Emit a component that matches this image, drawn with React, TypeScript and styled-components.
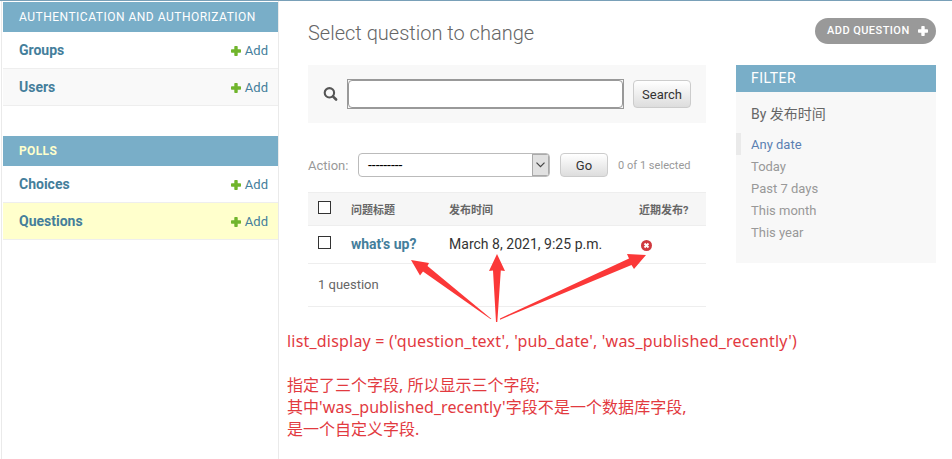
import React from "react";
import styled, { createGlobalStyle } from "styled-components";

const GlobalStyle = createGlobalStyle`
  * { box-sizing: border-box; }
  body {
    margin: 0;
    background: #fff;
    color: #333;
    font: 13px/20px Roboto, "Noto Sans CJK SC", sans-serif;
    overflow: hidden;
  }
  h1, h2, h3, ul, p { margin: 0; padding: 0; font-weight: 400; }
  a { color: #447e9b; text-decoration: none; }
`;

const Page = styled.div`
  position: relative;
  display: flex;
  width: 952px;
  height: 459px;
  border-top: 1px solid #79a0b8;
  overflow: hidden;
`;

const Sidebar = styled.nav`
  flex: none;
  width: 278px;
  margin-left: 1px;
  padding: 1px 0 0 1px;
  border-left: 1px solid #eaeaea;
  border-right: 1px solid #eaeaea;
  display: flex;
  flex-direction: column;
  gap: 30px;
`;

const Module = styled.section``;

const Caption = styled.h2<{ $current?: boolean }>`
  height: 30px;
  padding-left: 16px;
  background: #79aec8;
  color: ${(p) => (p.$current ? "#ffffcc" : "#fff")};
  font-size: 12px;
  line-height: 30px;
  font-weight: ${(p) => (p.$current ? 700 : 400)};
  letter-spacing: ${(p) => (p.$current ? "0.35px" : "0.5px")};
`;

const ModelRow = styled.div<{ $tone?: string }>`
  display: flex;
  align-items: center;
  justify-content: space-between;
  height: 37px;
  padding: 0 10px 0 16px;
  border-bottom: 1px solid #eee;
  background: ${(p) => p.$tone || "#fff"};
`;

const ModelLink = styled.a`
  font-size: 14px;
  font-weight: 700;
`;

const AddLink = styled.a`
  display: flex;
  align-items: center;
  gap: 4px;
  padding-top: 1px;
  svg { display: block; }
`;

const Main = styled.main`
  flex: none;
  width: 628px;
  margin-left: 29px;
`;

const TitleBar = styled.header`
  display: flex;
  justify-content: space-between;
  height: 64px;
`;

const Title = styled.h1`
  padding-top: 20px;
  font-size: 20px;
  line-height: 24px;
  font-weight: 300;
  color: #666;
`;

const AddButton = styled.a`
  display: flex;
  align-items: center;
  justify-content: space-between;
  width: 121px;
  height: 26px;
  margin-top: 17px;
  padding: 0 8px 0 12px;
  border-radius: 13px;
  background: #999;
  color: #fff;
  font-size: 11px;
  font-weight: 500;
  letter-spacing: 0.45px;
  white-space: nowrap;
`;

const Columns = styled.div`
  display: grid;
  grid-template-columns: 398px 200px;
  gap: 30px;
  align-items: start;
`;

const ChangeList = styled.div``;

const Toolbar = styled.form`
  display: flex;
  align-items: center;
  height: 58px;
  padding: 0 15px;
  background: #f8f8f8;
`;

const SearchFrame = styled.div`
  width: 277px;
  height: 30px;
  margin: 0 9px;
  border: 1px solid #999;
`;

const SearchInput = styled.input`
  display: block;
  width: 100%;
  height: 28px;
  border: 1px solid #999;
  border-radius: 4px;
  background: #fff;
  outline: none;
`;

const Button = styled.button<{ $w: number; $h: number }>`
  width: ${(p) => p.$w}px;
  height: ${(p) => p.$h}px;
  padding: 0;
  border: 1px solid #ccc;
  border-radius: 4px;
  background: linear-gradient(#fff, #ddd);
  color: #333;
  font: 13px Roboto, sans-serif;
`;

const Actions = styled.div`
  display: flex;
  align-items: center;
  height: 24px;
  margin: 30px 0 15px;
  color: #999;
`;

const ActionLabel = styled.span`
  width: 50px;
  padding-top: 1px;
`;

const SelectBox = styled.div`
  display: flex;
  justify-content: space-between;
  width: 192px;
  height: 24px;
  margin-right: 10px;
  border: 1px solid #bbb;
  border-radius: 4px;
  background: #fff;
  overflow: hidden;
`;

const SelectValue = styled.span`
  padding-left: 9px;
  color: #000;
  font-size: 14px;
  line-height: 22px;
  letter-spacing: -0.05px;
`;

const SelectArrow = styled.span`
  display: flex;
  align-items: center;
  justify-content: center;
  width: 17px;
  border: 1px solid #aaa;
  background: #e1e1e1;
`;

const Counter = styled.span`
  margin-left: 10px;
  padding-top: 1px;
  font-size: 11px;
  letter-spacing: 0.03px;
`;

const Row = styled.div<{ $head?: boolean }>`
  display: grid;
  grid-template-columns: 43px 98px 190px 1fr;
  align-items: center;
  height: ${(p) => (p.$head ? 34 : 38)}px;
  border-top: ${(p) => (p.$head ? "1px solid #eee" : "0")};
  border-bottom: 1px solid #eee;
  background: ${(p) => (p.$head ? "#f6f6f6" : "#fff")};
  color: ${(p) => (p.$head ? "#666" : "#333")};
  font-size: ${(p) => (p.$head ? 11 : 14)}px;
  font-weight: ${(p) => (p.$head ? 700 : 400)};
  white-space: nowrap;
`;

const HeadCell = styled.span`
  padding-top: 3px;
`;

const Box = styled.span`
  width: 13px;
  height: 13px;
  margin: -4px 0 0 10px;
  border: 1px solid #333;
  background: #fff;
`;

const RecordLink = styled.a`
  padding-bottom: 2px;
  font-weight: 700;
`;

const DateCell = styled.span`
  padding-bottom: 1px;
  letter-spacing: 0.02px;
`;

const StatusCell = styled.span`
  display: flex;
  padding: 2px 0 0 2px;
`;

const Paginator = styled.p`
  height: 43px;
  padding-left: 10px;
  border-bottom: 1px solid #eee;
  color: #666;
  line-height: 42px;
`;

const Filter = styled.aside`
  height: 198px;
  background: #f8f8f8;
`;

const FilterCaption = styled.h2`
  height: 27px;
  padding-left: 15px;
  background: #79aec8;
  color: #fff;
  font-size: 14px;
  line-height: 27px;
  letter-spacing: 0.5px;
`;

const FilterTitle = styled.h3`
  height: 41px;
  padding-left: 15px;
  color: #666;
  font-size: 14px;
  line-height: 44px;
`;

const FilterList = styled.ul`
  list-style: none;
`;

const FilterItem = styled.li<{ $selected?: boolean }>`
  height: 22px;
  padding-left: ${(p) => (p.$selected ? 10 : 15)}px;
  border-left: ${(p) => (p.$selected ? "5px solid #eaeaea" : "0")};
  color: ${(p) => (p.$selected ? "#5b80b2" : "#999")};
  line-height: 23px;
`;

const Arrows = styled.svg`
  position: absolute;
  left: 400px;
  top: 249px;
`;

const Note = styled.div`
  position: absolute;
  left: 287px;
  top: 329px;
  color: #e23a3f;
  font: 16px/22px "Noto Sans", "Noto Sans CJK SC", sans-serif;
  white-space: nowrap;
`;

const NoteLine = styled.p<{ $track?: number; $gap?: boolean }>`
  height: 22px;
  margin-bottom: ${(p) => (p.$gap ? 22 : 0)}px;
  letter-spacing: ${(p) => p.$track || 0}px;
`;

const Plus = ({ color, size = 10 }: { color: string; size?: number }) => (
  <svg width={size} height={size} viewBox="0 0 10 10">
    <path
      d="M3.300 .7q0-.7.7-.7h2q.7 0 .7.7v2.600h2.600q.7 0 .7.7v2q0 .7-.7.7H6.700v2.600q0 .7-.7.7H4q-.7 0-.7-.7V6.700H.7q-.7 0-.7-.7V4q0-.7.7-.7h2.600z"
      fill={color}
    />
  </svg>
);

const Model = ({ name, tone }: { name: string; tone?: string }) => (
  <ModelRow $tone={tone}>
    <ModelLink href="#">{name}</ModelLink>
    <AddLink href="#">
      <Plus color="#70b52c" />
      Add
    </AddLink>
  </ModelRow>
);

const dates = ["Any date", "Today", "Past 7 days", "This month", "This year"];

export default function App() {
  return (
    <>
      <GlobalStyle />
      <Page>
        <Sidebar>
          <Module>
            <Caption>AUTHENTICATION AND AUTHORIZATION</Caption>
            <Model name="Groups" />
            <Model name="Users" tone="#f9f9f9" />
          </Module>
          <Module>
            <Caption $current>POLLS</Caption>
            <Model name="Choices" />
            <Model name="Questions" tone="#ffffcc" />
          </Module>
        </Sidebar>
        <Main>
          <TitleBar>
            <Title>Select question to change</Title>
            <AddButton href="#">
              ADD QUESTION
              <Plus color="#fff" size={10} />
            </AddButton>
          </TitleBar>
          <Columns>
            <ChangeList>
              <Toolbar>
                <svg width="15" height="15" viewBox="0 0 15 15" fill="none" stroke="#555">
                  <circle cx="6.400" cy="5.800" r="4.700" strokeWidth="2.100" />
                  <path d="M9.900 9.300L13.100 12.500" strokeWidth="2.600" strokeLinecap="round" />
                </svg>
                <SearchFrame>
                  <SearchInput type="text" aria-label="Search" />
                </SearchFrame>
                <Button type="button" $w={58} $h={28}>
                  Search
                </Button>
              </Toolbar>
              <Actions>
                <ActionLabel>Action:</ActionLabel>
                <SelectBox>
                  <SelectValue>---------</SelectValue>
                  <SelectArrow>
                    <svg width="9" height="6" viewBox="0 0 9 6" fill="none" stroke="#444" strokeWidth="1.200">
                      <path d="M.5 .7L4.500 4.700L8.500 .7" />
                    </svg>
                  </SelectArrow>
                </SelectBox>
                <Button type="button" $w={48} $h={24}>
                  Go
                </Button>
                <Counter>0 of 1 selected</Counter>
              </Actions>
              <Row $head>
                <Box />
                <HeadCell>问题标题</HeadCell>
                <HeadCell>发布时间</HeadCell>
                <HeadCell>近期发布?</HeadCell>
              </Row>
              <Row>
                <Box />
                <RecordLink href="#">what's up?</RecordLink>
                <DateCell>March 8, 2021, 9:25 p.m.</DateCell>
                <StatusCell>
                  <svg width="11" height="11" viewBox="0 0 11 11">
                    <circle cx="5.500" cy="5.500" r="5.500" fill="#d0393f" />
                    <path d="M3.500 3.500l4 4m0-4l-4 4" stroke="#fff" strokeWidth="1.900" />
                  </svg>
                </StatusCell>
              </Row>
              <Paginator>1 question</Paginator>
            </ChangeList>
            <Filter>
              <FilterCaption>FILTER</FilterCaption>
              <FilterTitle>By 发布时间</FilterTitle>
              <FilterList>
                {dates.map((d, i) => (
                  <FilterItem key={d} $selected={i === 0}>
                    {d}
                  </FilterItem>
                ))}
              </FilterList>
            </Filter>
          </Columns>
        </Main>
        <Arrows width="256" height="76" viewBox="400 250 256 76" fill="#fb3838">
          <path d="M411 260L429 263L427.500 266L491.500 319L490.500 319L423 271.500L420 275.500Z" />
          <path d="M497 254L505 271L500.800 270.500L497.300 322L496 322L493 270.500L489 271Z" />
          <path d="M646 255L634 269L631.500 265L500 319.700L500 318.500L629 258.500L627 254Z" />
        </Arrows>
        <Note>
          <NoteLine $gap $track={0.2}>
            list_display = ('question_text', 'pub_date', 'was_published_recently')
          </NoteLine>
          <NoteLine>指定了三个字段, 所以显示三个字段;</NoteLine>
          <NoteLine $track={0.05}>其中'was_published_recently'字段不是一个数据库字段,</NoteLine>
          <NoteLine>是一个自定义字段.</NoteLine>
        </Note>
      </Page>
    </>
  );
}
